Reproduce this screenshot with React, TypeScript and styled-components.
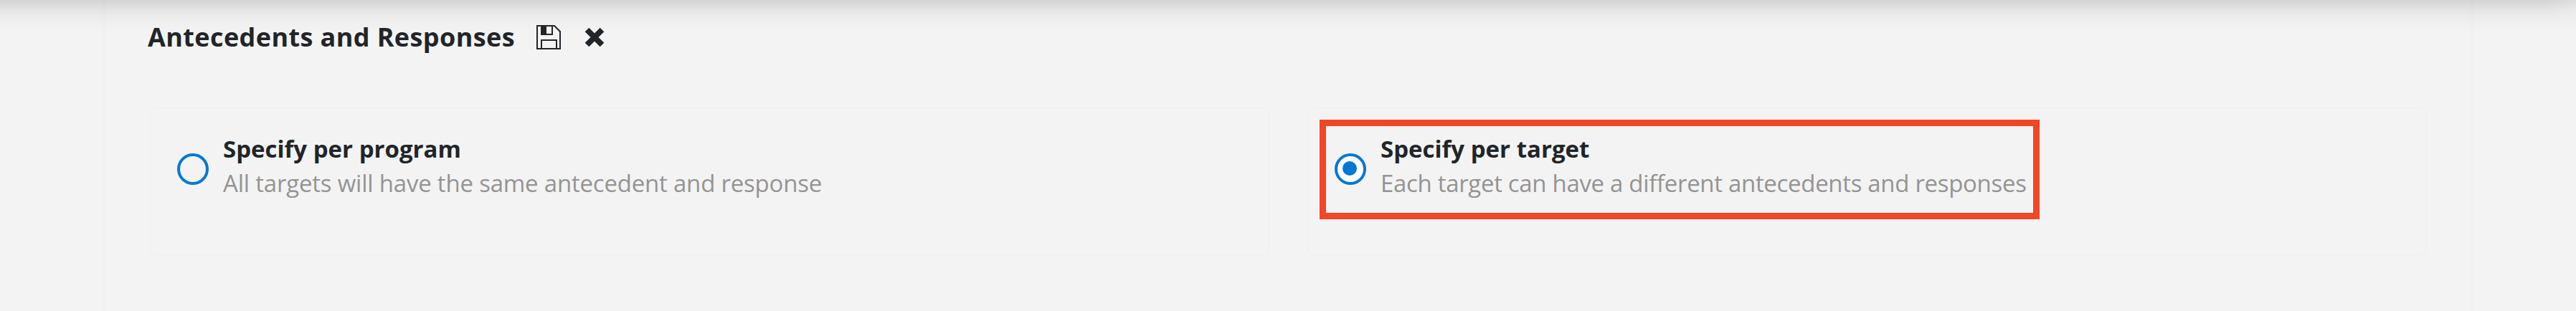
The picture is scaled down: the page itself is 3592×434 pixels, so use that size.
import styled, { createGlobalStyle } from "styled-components";

const GlobalStyle = createGlobalStyle`
  * {
    box-sizing: border-box;
  }

  body {
    margin: 0;
    background: #f3f3f3;
    color: #212529;
    font-family: "Open Sans", "Noto Sans", sans-serif;
  }
`;

const Page = styled.div`
  height: 434px;
  overflow: hidden;
  background:
    linear-gradient(to right, rgba(243, 243, 243, 0) calc(100% - 40px), rgba(243, 243, 243, 0.35) 100%),
    linear-gradient(#d4d4d4 0, #d8d8d8 4px, #e4e4e4 13px, #ececec 23px, #f0f0f0 33px, #f3f3f3 46px);
  padding: 0 144px;
`;

const Panel = styled.section`
  height: 100%;
  border: solid rgba(0, 0, 0, 0.012);
  border-width: 0 2px;
  padding: 28px 59px 0 62px;
`;

const Header = styled.header`
  display: flex;
  align-items: center;
  height: 48px;
  margin-left: -2px;
`;

const Title = styled.h2`
  margin: 0;
  width: 542px;
  font-size: 36px;
  line-height: 48px;
  font-weight: 700;
  letter-spacing: 0.4px;
  white-space: nowrap;
`;

const IconButton = styled.button<{ $gap?: number }>`
  display: flex;
  padding: 0;
  margin: 0 ${(props) => props.$gap || 0}px 0 0;
  border: 0;
  background: none;
  color: inherit;
`;

const Options = styled.div`
  display: grid;
  grid-template-columns: 1563px 1563px;
  column-gap: 51px;
  margin-top: 73px;
`;

const OptionCard = styled.label`
  display: flex;
  height: 209px;
  border: 3px solid #f1f1f1;
  border-radius: 11px;
  padding: 15px 0 0 15px;
`;

const OptionBody = styled.div<{ $highlighted?: boolean }>`
  display: flex;
  align-items: flex-start;
  width: 1004px;
  height: 139px;
  border: 9px solid ${(props) => (props.$highlighted ? "#f24726" : "transparent")};
  padding: 8px 0 0 12px;
`;

const Radio = styled.span<{ $checked?: boolean }>`
  display: flex;
  align-items: center;
  justify-content: center;
  flex: none;
  width: 44px;
  height: 44px;
  margin: 30px 20px 0 0;
  border: 4px solid #0078d4;
  border-radius: 50%;
  background: ${(props) => (props.$checked ? "#fff" : "transparent")};
`;

const Dot = styled.span`
  width: 20px;
  height: 20px;
  margin: 0 2px 2px 0;
  border-radius: 50%;
  background: #0078d4;
`;

const OptionName = styled.div`
  font-size: 33px;
  line-height: 48px;
  font-weight: 700;
  white-space: nowrap;
`;

const OptionText = styled.div<{ $tight?: boolean }>`
  color: #949494;
  font-size: 33px;
  line-height: 48px;
  letter-spacing: ${(props) => (props.$tight ? "-0.32px" : "-0.21px")};
  white-space: nowrap;
`;

interface OptionProps {
  name: string;
  text: string;
  checked?: boolean;
}

function Option({ name, text, checked }: OptionProps) {
  return (
    <OptionCard>
      <OptionBody $highlighted={checked}>
        <Radio $checked={checked}>{checked && <Dot />}</Radio>
        <div>
          <OptionName>{name}</OptionName>
          <OptionText $tight={checked}>{text}</OptionText>
        </div>
      </OptionBody>
    </OptionCard>
  );
}

function SaveIcon() {
  return (
    <svg width="34" height="34" viewBox="0 0 34 34" fill="none" stroke="currentColor" strokeWidth="2">
      <path d="M1 1h24l8 8v24H1z" />
      <path d="M7 1v12h15V1M7 33V21h21v12" />
      <path d="M7 1h7v12H7z" fill="currentColor" stroke="none" />
    </svg>
  );
}

function CloseIcon() {
  return (
    <svg width="28" height="30" viewBox="0 -1 28 30" stroke="currentColor" strokeWidth="8">
      <path d="M3.5 3.5l21 21M24.5 3.5l-21 21" />
    </svg>
  );
}

function App() {
  return (
    <>
      <GlobalStyle />
      <Page>
        <Panel>
          <Header>
            <Title>Antecedents and Responses</Title>
            <IconButton $gap={33} aria-label="Save">
              <SaveIcon />
            </IconButton>
            <IconButton aria-label="Close">
              <CloseIcon />
            </IconButton>
          </Header>
          <Options>
            <Option name="Specify per program" text="All targets will have the same antecedent and response" />
            <Option
              name="Specify per target"
              text="Each target can have a different antecedents and responses"
              checked
            />
          </Options>
        </Panel>
      </Page>
    </>
  );
}

export default App;
